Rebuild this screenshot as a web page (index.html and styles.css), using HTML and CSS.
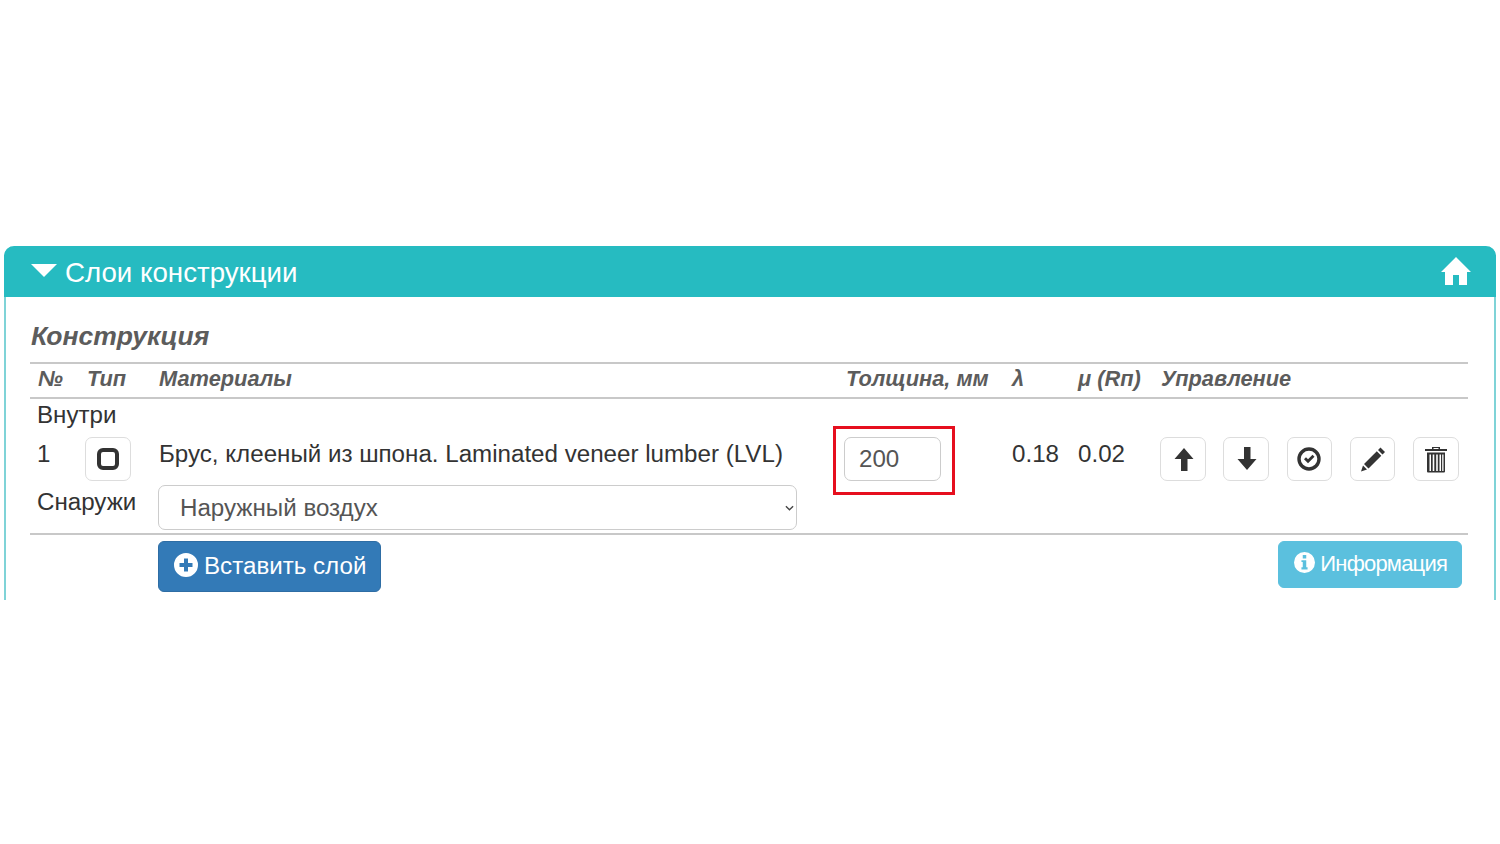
FILE: index.html
```html
<!DOCTYPE html>
<html lang="ru">
<head>
<meta charset="utf-8">
<title>Слои конструкции</title>
<link rel="stylesheet" href="styles.css">
</head>
<body>
<section class="panel">
  <header class="panel-head">
    <svg class="caret" viewBox="0 0 26 13"><path d="M0 0H26L13 13Z"/></svg>
    <h2 class="panel-title">Слои конструкции</h2>
    <svg class="home" viewBox="0 0 30 28"><path d="M15 0L30 15H26V28H18V18H12V28H4V15H0Z"/></svg>
  </header>
  <div class="panel-body">
    <h3 class="section-title">Конструкция</h3>
    <table class="layers">
      <colgroup>
        <col class="c-num"><col class="c-type"><col class="c-mat"><col class="c-thick"><col class="c-lambda"><col class="c-mu"><col class="c-ctl">
      </colgroup>
      <thead>
        <tr><th>№</th><th>Тип</th><th>Материалы</th><th>Толщина, мм</th><th>λ</th><th>μ (Rп)</th><th>Управление</th></tr>
      </thead>
      <tbody>
        <tr class="row-label"><td colspan="7">Внутри</td></tr>
        <tr class="row-layer">
          <td class="cell-num">1</td>
          <td class="cell-type">
            <button class="icon-btn" type="button"><svg class="ico" viewBox="0 0 24 24"><rect x="3" y="3" width="18" height="18" rx="4" class="ring ring-heavy"/></svg></button>
          </td>
          <td>Брус, клееный из шпона. Laminated veneer lumber (LVL)</td>
          <td class="cell-thick"><span class="mark"><input class="thick-input" type="text" value="200"></span></td>
          <td>0.18</td>
          <td>0.02</td>
          <td>
            <div class="controls">
              <button class="icon-btn" type="button"><svg class="ico" viewBox="0 0 24 24"><path d="M13 1L22.500 12H16.500V24H10V12H3.500Z"/></svg></button>
              <button class="icon-btn" type="button"><svg class="ico" viewBox="0 0 24 24"><path d="M10 0H16.500V12H22.500L13 23L3.500 12H10Z"/></svg></button>
              <button class="icon-btn" type="button"><svg class="ico" viewBox="0 0 24 24"><circle cx="12" cy="12" r="10" class="ring"/><path d="M7 12.200L9 10.200L11 12.200L15.500 7.800L17.500 9.800L11 16.200Z"/></svg></button>
              <button class="icon-btn" type="button"><svg class="ico" viewBox="0 0 24 24"><path d="M19.500 0.500L24 5L21.500 7.500L17 3ZM15.800 4.200L20.300 8.700L7.500 21.500L3 17ZM2 18.500L6 22.500L0 24.500Z"/></svg></button>
              <button class="icon-btn" type="button"><svg class="ico" viewBox="0 0 24 24"><path d="M8 0H16V2H23V4H1V2H8ZM9.500 1V2H14.500V1Z" fill-rule="evenodd"/><path d="M3 5.500H21V24.500Q21 25.500 20 25.500H4Q3 25.500 3 24.500ZM5.500 7.500V24H7V7.500ZM8.700 7.500V24H10.300V7.500ZM12.200 7.500V24H13.800V7.500ZM15.500 7.500V24H17V7.500ZM18.200 7.500V24H19.500V7.500Z" fill-rule="evenodd"/></svg></button>
            </div>
          </td>
        </tr>
        <tr class="row-out">
          <td colspan="2">Снаружи</td>
          <td colspan="5">
            <span class="select-wrap">
              <select class="air-select"><option>Наружный воздух</option></select>
              <svg class="chevron" viewBox="0 0 10 6"><path d="M1 1L5 5L9 1"/></svg>
            </span>
          </td>
        </tr>
      </tbody>
    </table>
    <div class="actions">
      <button class="btn btn-primary" type="button"><svg class="btn-ico" viewBox="0 0 24 24"><path fill-rule="evenodd" d="M12 0A12 12 0 1 1 12 24A12 12 0 1 1 12 0ZM10 5.500V10H5.500V14H10V18.500H14V14H18.500V10H14V5.500Z"/></svg>Вставить слой</button>
      <button class="btn btn-info" type="button"><svg class="btn-ico" viewBox="0 0 24 24"><path fill-rule="evenodd" d="M12 0A12 12 0 1 1 12 24A12 12 0 1 1 12 0ZM10 3.500V7.500H14V3.500ZM8.500 9.500V11.500H10V17.500H8.500V20H15.500V17.500H14V9.500Z"/></svg>Информация</button>
    </div>
  </div>
</section>
</body>
</html>
```
FILE: styles.css
```css
* { box-sizing: border-box; }
body {
  margin: 0;
  padding: 246px 4px 0;
  background: #fff;
  color: #333;
  font-family: "Liberation Sans", Arial, sans-serif;
  font-size: 24.15px;
}
.panel {
  height: 354px;
  border: solid #7fd3d7;
  border-width: 0 2px;
  border-radius: 10px 10px 0 0;
}
.panel-head {
  display: flex;
  align-items: center;
  height: 51px;
  margin: 0 -2px;
  padding: 0 25px 0 27px;
  background: #26bbc1;
  border-radius: 10px 10px 0 0;
  color: #fff;
}
.caret { width: 26px; height: 13px; fill: #fff; margin: -3px 8px 0 0; }
.panel-title { flex: 1; margin: 0; padding-top: 3px; font-size: 27.7px; font-weight: 400; line-height: 48px; }
.home { width: 30px; height: 28px; fill: #fff; margin-top: -2px; }
.panel-body { padding: 0 26px 0 24px; }
.section-title {
  margin: 0;
  height: 65px;
  padding: 23px 0 0 1px;
  font-size: 26.5px;
  line-height: 32px;
  font-style: italic;
  font-weight: 700;
  color: #5c5c5c;
}
.layers { width: 100%; border-collapse: collapse; table-layout: fixed; }
.c-num { width: 49px; }
.c-type { width: 72px; }
.c-mat { width: 687px; }
.c-thick { width: 166px; }
.c-lambda { width: 66px; }
.c-mu { width: 83px; }
.layers th {
  height: 35px;
  padding: 0 8px 3px;
  border-top: 2px solid #c8c8c8;
  border-bottom: 2px solid #c8c8c8;
  text-align: left;
  font-size: 21.8px;
  font-style: italic;
  color: #5c5c5c;
  white-space: nowrap;
}
.layers td { padding: 0 0 0 8px; vertical-align: top; white-space: nowrap; }
.row-label td { height: 39px; line-height: 31px; padding-left: 7px; }
.row-layer td { height: 48px; line-height: 34px; }
.layers .cell-num { padding-left: 7px; }
.row-out td { height: 49px; line-height: 34px; padding-left: 7px; border-bottom: 2px solid #c8c8c8; }
.layers .row-out td + td { padding-left: 7px; }
.layers .cell-type { padding-left: 6px; }
.icon-btn {
  display: flex;
  align-items: center;
  justify-content: center;
  width: 46px;
  height: 44px;
  padding: 0;
  background: #fff;
  border: 1px solid #ddd;
  border-radius: 7px;
}
.ico { width: 24px; height: 24px; fill: #333; overflow: visible; }
.ring { fill: none; stroke: #333; stroke-width: 3.4; }
.ring-heavy { stroke-width: 4; }
.controls { display: flex; gap: 17.75px; margin-left: -1px; }
.controls .icon-btn { width: 45.5px; }
.layers .cell-thick { padding-left: 6px; }
.mark { position: relative; display: block; width: 97px; height: 44px; }
.mark::after {
  content: "";
  position: absolute;
  top: -11px;
  right: -14px;
  bottom: -14px;
  left: -11px;
  border: 3px solid #e60f1e;
  pointer-events: none;
}
.thick-input {
  display: block;
  width: 97px;
  height: 44px;
  padding: 0 14px;
  border: 1px solid #ccc;
  border-radius: 7px;
  color: #555;
  background: #fff;
  font: inherit;
}
.select-wrap { position: relative; display: block; width: 639px; }
.air-select {
  display: block;
  width: 100%;
  height: 45px;
  padding: 0 0 0 21px;
  appearance: none;
  background: #fff;
  border: 1px solid #ccc;
  border-radius: 7px;
  color: #555;
  font: inherit;
}
.chevron {
  position: absolute;
  top: 20px;
  right: 3px;
  width: 9px;
  height: 6px;
  fill: none;
  stroke: #444;
  stroke-width: 1.5;
  pointer-events: none;
}
.actions { display: flex; justify-content: space-between; align-items: flex-start; padding: 6px 6px 0 128px; }
.btn {
  display: flex;
  align-items: center;
  border-radius: 6px;
  color: #fff;
  font-family: inherit;
  white-space: nowrap;
}
.btn-primary {
  height: 51px;
  padding: 0 14px 2px 15px;
  border: 1px solid #2e6da4;
  background: #337ab7;
  font-size: 24.15px;
}
.btn-info {
  height: 47px;
  padding: 0 14px 2px 15px;
  border: 1px solid #5bc0de;
  background: #5bc0de;
  font-size: 22px;
  letter-spacing: -0.8px;
}
.btn-ico { width: 24px; height: 24px; margin: -2px 6px 0 0; fill: #fff; }
.btn-info .btn-ico { width: 21px; height: 21px; margin-right: 5px; }
```
